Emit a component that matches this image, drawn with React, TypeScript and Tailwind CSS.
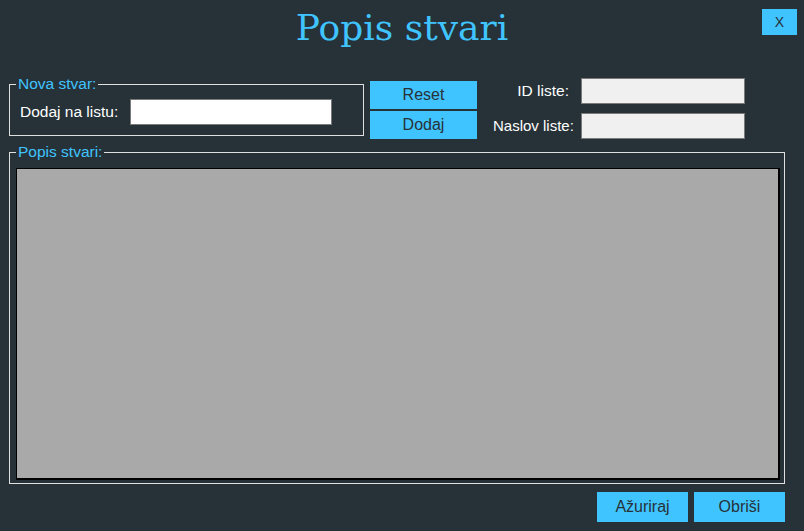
import React from "react";

const sans = "font-['Liberation_Sans',Arial,sans-serif]";

export default function App() {
  return (
    <div className={`w-[804px] h-[531px] bg-[#263238] ${sans} flex flex-col overflow-hidden`}>
      {/* header */}
      <div className="relative h-[76px] flex justify-center">
        <h1 className="mt-[4px] text-[36px] leading-[48px] text-[#40c4ff] font-['DejaVu_Serif',serif]">
          Popis stvari
        </h1>
        <button className="absolute right-[7px] top-[9px] w-[35px] h-[26px] bg-[#40c4ff] text-[#263238] text-[14px] flex items-center justify-center">
          X
        </button>
      </div>

      {/* top row */}
      <div className="flex items-start pl-[9px]">
        <fieldset className="w-[355px] h-[60px] border border-[#e0e0e0]">
          <legend className="ml-[6px] px-[2px] text-[15.5px] leading-[16px] text-[#40c4ff]">
            Nova stvar:
          </legend>
          <div className="flex items-center pl-[10px] pt-[7px]">
            <span className="text-[15.5px] text-white">Dodaj na listu:</span>
            <input className="ml-[12px] w-[202px] h-[26px] bg-white border border-[#7a7a7a] outline-none" />
          </div>
        </fieldset>

        <div className="ml-[6px] mt-[5px] flex flex-col gap-[2px]">
          <button className="w-[107px] h-[28px] bg-[#40c4ff] text-[#263238] text-[16px]">Reset</button>
          <button className="w-[107px] h-[28px] bg-[#40c4ff] text-[#263238] text-[16px]">Dodaj</button>
        </div>

        <div className="ml-[16px] mt-[2px] grid grid-cols-[88px_164px] gap-y-[9px] items-center">
          <span className="text-right pr-[12px] text-[15.5px] text-white">ID liste:</span>
          <input className="h-[26px] bg-[#f0f0f0] border border-[#7a7a7a] outline-none" />
          <span className="text-right pr-[8px] text-[15px] text-white whitespace-nowrap">Naslov liste:</span>
          <input className="h-[26px] bg-[#f0f0f0] border border-[#7a7a7a] outline-none" />
        </div>
      </div>

      {/* list */}
      <fieldset className="ml-[9px] mt-[5px] w-[776px] border border-[#e0e0e0]">
        <legend className="ml-[6px] px-[2px] text-[15.5px] leading-[16px] text-[#40c4ff]">
          Popis stvari:
        </legend>
        <div className="ml-[6px] mr-[4px] mt-[8px] mb-[3px] h-[312px] bg-[#a9a9a9] border border-black border-r-2 border-b-2" />
      </fieldset>

      {/* bottom buttons */}
      <div className="flex justify-end gap-[6px] pr-[19px] mt-[8px]">
        <button className="w-[91px] h-[30px] bg-[#40c4ff] text-[#263238] text-[16px]">Ažuriraj</button>
        <button className="w-[91px] h-[30px] bg-[#40c4ff] text-[#263238] text-[16px]">Obriši</button>
      </div>
    </div>
  );
}
